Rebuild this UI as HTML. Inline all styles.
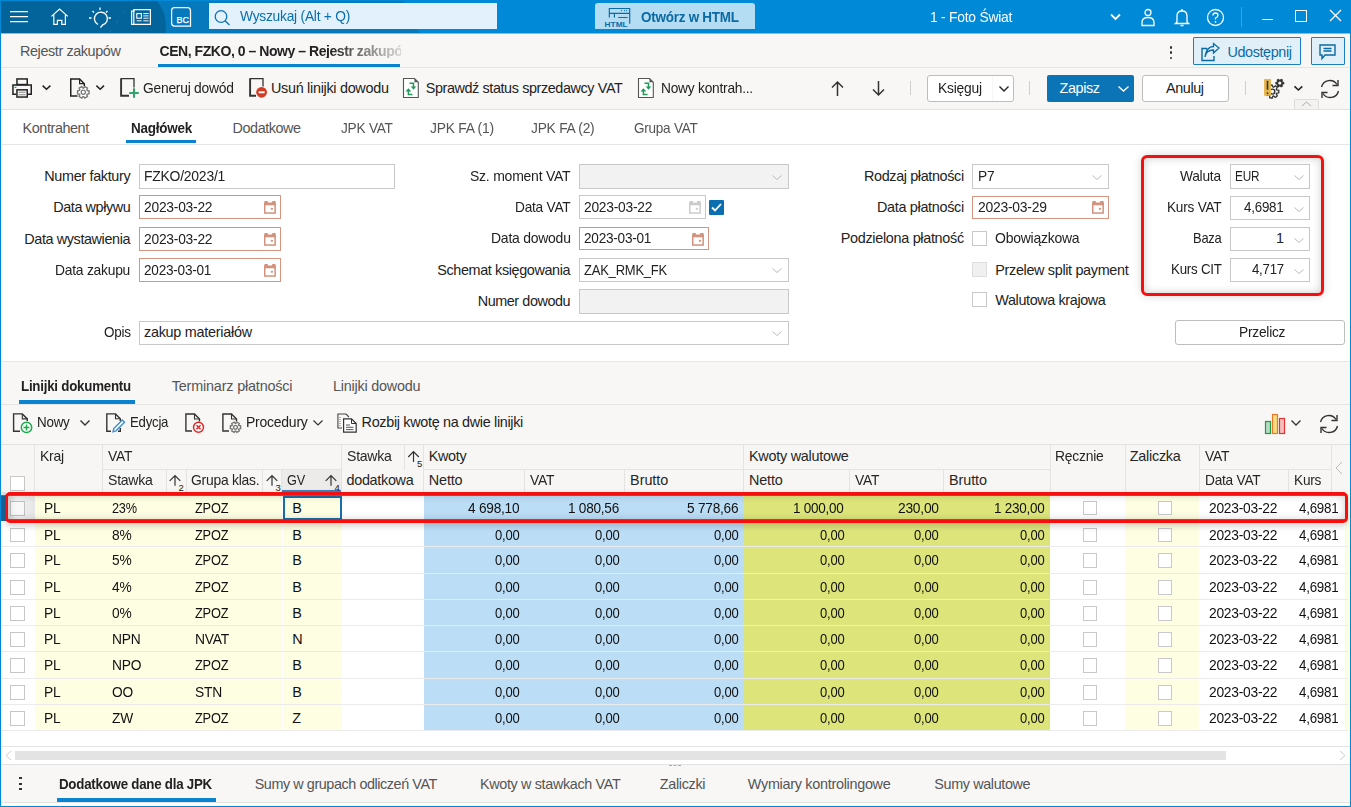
<!DOCTYPE html><html><head><meta charset="utf-8"><style>
html,body{margin:0;padding:0;}
body{width:1351px;height:807px;position:relative;overflow:hidden;background:#fff;font-family:"Liberation Sans",sans-serif;}
.t{position:absolute;white-space:nowrap;line-height:1;}
.r{position:absolute;box-sizing:border-box;}
</style></head><body>
<div class="r" style="left:0px;top:0px;width:1351px;height:34px;background:#0089d6;"></div>
<svg class="r" style="left:1px;top:1px;" width="430" height="32" viewBox="1 1 430 32"><path d="M1 1 H404 L419.5 33 H1 Z" fill="#0679bd"/></svg>
<div class="r" style="left:1px;top:33px;width:1349px;height:1px;background:#7fbfe6;"></div>
<svg class="r" style="left:1px;top:1px;" width="170" height="32" viewBox="0 0 170 32"><path d="M0 0 H156 C162 8 166 16 164.5 32 H0 Z" fill="#02649b"/><path d="M132 0 L107 33" stroke="#2a7db0" stroke-width="1" stroke-dasharray="4 8" opacity="0.6"/></svg>
<svg class="r" style="left:8px;top:8px;" width="22" height="18" viewBox="8 8 22 18"><path d="M10 11.6 H28 M10 16.5 H28 M10 21.5 H28" stroke="#fff" stroke-width="1.25"/></svg>
<svg class="r" style="left:48px;top:6px;" width="24" height="22" viewBox="48 6 24 22"><path d="M51.4 16.4 L59.6 9.1 L67.8 16.4" fill="none" stroke="#fff" stroke-width="1.25"/><path d="M53.8 14.6 V24.4 H57.4 V20.4 H61.8 V24.4 H65.4 V14.6" fill="none" stroke="#fff" stroke-width="1.2"/></svg>
<svg class="r" style="left:88px;top:6px;" width="24" height="22" viewBox="0 0 24 22"><path d="M8 19 A6.5 6.5 0 1 1 12.5 19.5 L10.5 22" fill="none" stroke="#fff" stroke-width="1.3" transform="translate(2,-0.5)"/><path d="M12 1.5 V4 M4.5 5 L6 6.5 M19.5 5 L18 6.5 M1 12 H3.5 M20.5 12 H23" stroke="#fff" stroke-width="1.3"/></svg>
<svg class="r" style="left:128px;top:6px;" width="26" height="22" viewBox="128 6 26 22"><path d="M133.8 9.6 H150.4 V24.3 H131.6 V11 H133.8 Z" fill="none" stroke="#fff" stroke-width="1.25"/><path d="M133.8 10 V24" stroke="#fff" stroke-width="1.2"/><rect x="136.8" y="13.6" width="4.6" height="4.6" fill="none" stroke="#fff" stroke-width="1.1"/><path d="M143.3 13.6 H148.6 M143.3 15.9 H148.6 M143.3 18.2 H148.6 M136.6 20.8 H141.6 M143.3 20.8 H148.6" stroke="#fff" stroke-width="0.95"/></svg>
<svg class="r" style="left:168px;top:4px;" width="26" height="26" viewBox="168 4 26 26"><path d="M174.5 7.7 H187.5 Q190.5 7.7 190.5 10.7 V26 H174.5 Q171.6 26 171.6 23 V10.7 Q171.6 7.7 174.5 7.7 Z" fill="none" stroke="#fff" stroke-width="1.25"/><text x="176.6" y="22.7" font-family="Liberation Sans" font-size="9" fill="#fff" stroke="#fff" stroke-width="0.25" textLength="12.5" lengthAdjust="spacingAndGlyphs">BC</text></svg>
<div class="r" style="left:209px;top:3px;width:288px;height:26px;background:#e2f1fb;"></div>
<svg class="r" style="left:213px;top:9px;" width="20" height="17" viewBox="0 0 20 17"><circle cx="8" cy="7.5" r="5.8" fill="none" stroke="#0a72b5" stroke-width="1.3"/><path d="M12 11.8 L16.5 16" stroke="#0a72b5" stroke-width="1.4"/></svg>
<div class="t" style="left:239.60px;top:9.01px;font-size:14.4px;font-weight:normal;color:#0a6fae;letter-spacing:-0.250px;transform:scaleX(0.9579);transform-origin:0 0;">Wyszukaj (Alt + Q)</div>
<div class="r" style="left:595px;top:3px;width:160px;height:26px;background:#b4dcf2;border-radius:3px 3px 0 0;"></div>
<svg class="r" style="left:600px;top:4px;" width="36" height="25" viewBox="600 4 36 25"><path d="M609.3 17.5 V8.5 H629.7 V23.7 M609.3 13.3 H629.7 M614.4 13.3 V17.5 M618.3 17.5 H627.7" fill="none" stroke="#0b6ba8" stroke-width="1.15"/><circle cx="621.5" cy="10.6" r="0.6" fill="#0b6ba8"/><circle cx="624.5" cy="10.6" r="0.6" fill="#0b6ba8"/><circle cx="626.6" cy="10.6" r="0.6" fill="#0b6ba8"/><text x="604.6" y="26.9" font-family="Liberation Sans" font-size="8.1" font-weight="bold" fill="#0b6ba8" textLength="23" lengthAdjust="spacingAndGlyphs">HTML</text></svg>
<div class="t" style="left:641.00px;top:9.95px;font-size:14.0px;font-weight:bold;color:#0b6aa3;letter-spacing:-0.250px;transform:scaleX(0.9608);transform-origin:0 0;">Otwórz w HTML</div>
<div class="t" style="left:929.50px;top:9.81px;font-size:14.4px;font-weight:normal;color:#fff;letter-spacing:-0.250px;transform:scaleX(0.9620);transform-origin:0 0;">1 - Foto Świat</div>
<svg class="r" style="left:1109px;top:12px;" width="13" height="9" viewBox="0 0 13 9"><path d="M2 2.5 L6.5 7 L11 2.5" fill="none" stroke="#fff" stroke-width="1.8"/></svg>
<svg class="r" style="left:1140px;top:8px;" width="16" height="19" viewBox="0 0 16 19"><circle cx="8" cy="4.5" r="3" fill="none" stroke="#fff" stroke-width="1.3"/><path d="M2 17.5 V14.5 Q2 9.5 8 9.5 Q14 9.5 14 14.5 V17.5 Z" fill="none" stroke="#fff" stroke-width="1.3"/></svg>
<svg class="r" style="left:1174px;top:8px;" width="16" height="19" viewBox="0 0 16 19"><path d="M3 14 V8 Q3 3 8 3 Q13 3 13 8 V14 L14.5 15.5 H1.5 Z" fill="none" stroke="#fff" stroke-width="1.3"/><path d="M8 1 V3 M6.5 17.5 H9.5" stroke="#fff" stroke-width="1.3"/></svg>
<svg class="r" style="left:1206px;top:8px;" width="19" height="19" viewBox="0 0 19 19"><circle cx="9.5" cy="9.5" r="8" fill="none" stroke="#fff" stroke-width="1.3"/><path d="M7 7.5 Q7 5 9.5 5 Q12 5 12 7.3 Q12 9 9.5 10 V11.5" fill="none" stroke="#fff" stroke-width="1.3"/><circle cx="9.5" cy="13.8" r="0.9" fill="#fff"/></svg>
<div class="r" style="left:1241px;top:7px;width:1px;height:20px;background:#3aa3e0;"></div>
<div class="r" style="left:1262px;top:19px;width:11px;height:1.3000000000000007px;background:#fff;"></div>
<div class="r" style="left:1295px;top:10px;width:12px;height:12px;border:1.3px solid #fff;"></div>
<svg class="r" style="left:1329px;top:9px;" width="13" height="13" viewBox="0 0 13 13"><path d="M1 1 L12 12 M12 1 L1 12" stroke="#fff" stroke-width="1.3"/></svg>
<div class="r" style="left:1px;top:34px;width:1349px;height:33px;background:#f8f7f5;"></div>
<div class="r" style="left:1px;top:67px;width:1349px;height:1px;background:#e6e5e3;"></div>
<div class="t" style="left:20.00px;top:44.11px;font-size:14.4px;font-weight:normal;color:#555;letter-spacing:-0.400px;">Rejestr zakupów</div>
<div class="t" style="left:159.5px;top:44.2px;font-size:14px;font-weight:bold;color:#222;letter-spacing:-0.45px;width:241px;overflow:hidden;-webkit-mask-image:linear-gradient(90deg,#000 70%,rgba(0,0,0,0.15) 100%);">CEN, FZKO, 0 – Nowy – Rejestr zakupów</div>
<div class="r" style="left:158px;top:63.5px;width:242px;height:3.5px;background:#0a84d0;"></div>
<div class="r" style="left:1169.5px;top:46px;width:2.5px;height:2.5px;background:#333;border-radius:1px;"></div>
<div class="r" style="left:1169.5px;top:51.3px;width:2.5px;height:2.5px;background:#333;border-radius:1px;"></div>
<div class="r" style="left:1169.5px;top:56.6px;width:2.5px;height:2.5px;background:#333;border-radius:1px;"></div>
<div class="r" style="left:1193px;top:37px;width:108px;height:28px;background:#e1eff9;border:1px solid #1c7fc0;border-radius:1px;"></div>
<svg class="r" style="left:1200px;top:42px;" width="22" height="20" viewBox="0 0 22 20"><path d="M7 6.5 H2 V18.5 H14 V14" fill="none" stroke="#0b6aa3" stroke-width="1.4"/><path d="M5 15 Q6 8 13.5 8 V11 L19 6 L13.5 1.5 V4.5 Q6.5 4.5 5 15 Z" fill="none" stroke="#0b6aa3" stroke-width="1.3"/></svg>
<div class="t" style="left:1227.40px;top:44.61px;font-size:14.4px;font-weight:normal;color:#0b6aa3;letter-spacing:-0.378px;">Udostępnij</div>
<div class="r" style="left:1311px;top:37px;width:34px;height:28px;background:#e1eff9;border:1px solid #1c7fc0;border-radius:1px;"></div>
<svg class="r" style="left:1318px;top:43px;" width="20" height="18" viewBox="0 0 20 18"><path d="M2 2 H17 V12 H7 L4 15.5 V12 H2 Z" fill="none" stroke="#0b6aa3" stroke-width="1.4"/><path d="M5.5 5.5 H13.5 M5.5 8 H13.5" stroke="#0b6aa3" stroke-width="1.4"/></svg>
<div class="r" style="left:1px;top:68px;width:1349px;height:41px;background:#f8f7f5;"></div>
<div class="r" style="left:1px;top:108.5px;width:1349px;height:1.0px;background:#e3e2e0;"></div>
<svg class="r" style="left:10px;top:76px;" width="26" height="24" viewBox="10 76 26 24"><rect x="16.95" y="78.95" width="10.3" height="5.6" fill="none" stroke="#222" stroke-width="1.5"/><path d="M16.2 94.25 H12.95 V84.95 H31.25 V94.25 H28" fill="none" stroke="#222" stroke-width="1.5"/><rect x="16.95" y="89.85" width="10.3" height="7.2" fill="none" stroke="#222" stroke-width="1.5"/><path d="M18.6 92.3 H25.6 M18.6 94.7 H25.6" stroke="#888" stroke-width="1.1"/><path d="M14.6 87.4 H16.4" stroke="#1a8ad4" stroke-width="1.3"/></svg>
<svg class="r" style="left:40px;top:83px;" width="14" height="9" viewBox="40 83 14 9"><path d="M42.6 85.6 L46.5 89.3 L50.4 85.6" fill="none" stroke="#222" stroke-width="1.5"/></svg>
<svg class="r" style="left:68px;top:76px;" width="24" height="24" viewBox="68 76 24 24"><path d="M77.5 96 H70.75 V78.95 H79.6 L84.3 83.7 V86.3" fill="none" stroke="#222" stroke-width="1.5"/><path d="M79.6 78.95 V83.7 H84.3" fill="none" stroke="#222" stroke-width="1.2"/><path d="M87.19 90.47 L89.00 90.77 L89.00 93.83 L87.19 94.13 L86.83 94.75 L87.47 96.47 L84.83 98.00 L83.66 96.58 L82.94 96.58 L81.77 98.00 L79.13 96.47 L79.77 94.75 L79.41 94.13 L77.60 93.83 L77.60 90.77 L79.41 90.47 L79.77 89.85 L79.13 88.13 L81.77 86.60 L82.94 88.02 L83.66 88.02 L84.83 86.60 L87.47 88.13 L86.83 89.85 Z" fill="#fff" stroke="#777" stroke-width="1.4"/><circle cx="83.3" cy="92.3" r="2.1" fill="none" stroke="#777" stroke-width="1.3"/></svg>
<svg class="r" style="left:94px;top:83px;" width="14" height="9" viewBox="94 83 14 9"><path d="M96.4 85.6 L100.2 89.2 L104 85.6" fill="none" stroke="#222" stroke-width="1.5"/></svg>
<svg class="r" style="left:118px;top:76px;" width="24" height="24" viewBox="118 76 24 24"><path d="M121.2 78.7 H134 V87.5" fill="none" stroke="#333" stroke-width="1.3"/><path d="M121.1 78.3 V95.7 H129" fill="none" stroke="#333" stroke-width="1.9"/><path d="M134 88.3 V97.8 M129.2 93 H138.8" stroke="#2ea36a" stroke-width="2"/></svg>
<div class="t" style="left:143.40px;top:80.81px;font-size:14.4px;font-weight:normal;color:#222;letter-spacing:-0.250px;transform:scaleX(0.9609);transform-origin:0 0;">Generuj dowód</div>
<svg class="r" style="left:247px;top:76px;" width="24" height="24" viewBox="247 76 24 24"><path d="M250.2 78.7 H263 V86.5" fill="none" stroke="#333" stroke-width="1.3"/><path d="M250.1 78.3 V95.7 H256" fill="none" stroke="#333" stroke-width="1.9"/><circle cx="261.6" cy="92.3" r="5.4" fill="#d23c24"/><path d="M258.6 92.3 H264.6" stroke="#fff" stroke-width="1.9"/></svg>
<div class="t" style="left:271.00px;top:80.81px;font-size:14.4px;font-weight:normal;color:#222;letter-spacing:-0.294px;">Usuń linijki dowodu</div>
<svg class="r" style="left:401px;top:76px;" width="20" height="24" viewBox="401 76 20 24"><path d="M403.5 78.5 H414.5 L418.3 82.3 V97.5 H403.5 Z" fill="#fff" stroke="#555" stroke-width="1.1"/><path d="M414.5 78.5 V82.3 H418.3 Z" fill="#555"/><path d="M409.5 83.3 H413.5 V88" fill="none" stroke="#21995a" stroke-width="1.5"/><path d="M410.8 86.6 H416.2 L413.5 89.8 Z" fill="#21995a"/><path d="M408.4 89.5 V94.6 H412.5" fill="none" stroke="#21995a" stroke-width="1.5"/><path d="M405.5 91.6 H411.3 L408.4 88.2 Z" fill="#21995a"/></svg>
<div class="t" style="left:425.70px;top:80.81px;font-size:14.4px;font-weight:normal;color:#222;letter-spacing:-0.396px;">Sprawdź status sprzedawcy VAT</div>
<svg class="r" style="left:636px;top:76px;" width="20" height="24" viewBox="636 76 20 24"><path d="M638.5 78.5 H649.5 L653.3 82.3 V97.5 H638.5 Z" fill="#fff" stroke="#555" stroke-width="1.1"/><path d="M649.5 78.5 V82.3 H653.3 Z" fill="#555"/><path d="M644.5 83.3 H648.5 V88" fill="none" stroke="#21995a" stroke-width="1.5"/><path d="M645.8 86.6 H651.2 L648.5 89.8 Z" fill="#21995a"/><path d="M643.4 89.5 V94.6 H647.5" fill="none" stroke="#21995a" stroke-width="1.5"/><path d="M640.5 91.6 H646.3 L643.4 88.2 Z" fill="#21995a"/></svg>
<div class="t" style="left:660.70px;top:80.81px;font-size:14.4px;font-weight:normal;color:#222;letter-spacing:-0.250px;transform:scaleX(0.9555);transform-origin:0 0;">Nowy kontrah...</div>
<svg class="r" style="left:830px;top:80px;" width="15" height="17" viewBox="0 0 15 17"><path d="M7.5 16 V2 M2 7.5 L7.5 2 L13 7.5" fill="none" stroke="#333" stroke-width="1.5"/></svg>
<svg class="r" style="left:871px;top:80px;" width="15" height="17" viewBox="0 0 15 17"><path d="M7.5 1 V15 M2 9.5 L7.5 15 L13 9.5" fill="none" stroke="#333" stroke-width="1.5"/></svg>
<div class="r" style="left:910px;top:81px;width:1px;height:14px;background:#cfcfcf;"></div>
<div class="r" style="left:927px;top:75px;width:87px;height:27px;background:#fff;border:1px solid #bdbdbd;border-radius:3px;"></div>
<div class="r" style="left:992px;top:76px;width:1px;height:25px;background:#f6f6f6;"></div>
<div class="t" style="left:938.00px;top:80.81px;font-size:14.4px;font-weight:normal;color:#222;letter-spacing:-0.250px;transform:scaleX(0.9628);transform-origin:0 0;">Księguj</div>
<svg class="r" style="left:998px;top:85px;" width="12" height="8" viewBox="0 0 12 8"><path d="M1.5 1.5 L6 6 L10.5 1.5" fill="none" stroke="#222" stroke-width="1.4"/></svg>
<div class="r" style="left:1029px;top:81px;width:1px;height:14px;background:#cfcfcf;"></div>
<div class="r" style="left:1047px;top:75px;width:87px;height:27px;background:#0a74b6;border-radius:2px;"></div>
<div class="t" style="left:1059.60px;top:81.31px;font-size:14.4px;font-weight:normal;color:#fff;letter-spacing:-0.400px;">Zapisz</div>
<svg class="r" style="left:1117px;top:85px;" width="13" height="8" viewBox="0 0 13 8"><path d="M1.5 1.5 L6.5 6 L11.5 1.5" fill="none" stroke="#fff" stroke-width="1.4"/></svg>
<div class="r" style="left:1142px;top:75px;width:87px;height:27px;background:#fff;border:1px solid #bdbdbd;border-radius:3px;"></div>
<div class="t" style="left:1166.00px;top:81.31px;font-size:14.4px;font-weight:normal;color:#222;letter-spacing:-0.400px;">Anuluj</div>
<div class="r" style="left:1245px;top:81px;width:1px;height:14px;background:#cfcfcf;"></div>
<svg class="r" style="left:1260px;top:76px;" width="30" height="24" viewBox="1260 76 30 24"><path d="M1276.58 89.91 L1278.78 90.36 L1278.78 92.84 L1276.58 93.29 L1276.29 93.89 L1277.31 95.90 L1275.38 97.44 L1273.64 96.00 L1273.00 96.15 L1272.06 98.20 L1269.65 97.65 L1269.70 95.39 L1269.18 94.98 L1267.00 95.53 L1265.92 93.30 L1267.71 91.93 L1267.71 91.27 L1265.92 89.90 L1267.00 87.67 L1269.18 88.22 L1269.70 87.81 L1269.65 85.55 L1272.06 85.00 L1273.00 87.05 L1273.64 87.20 L1275.38 85.76 L1277.31 87.30 L1276.29 89.31 Z" fill="none" stroke="#333" stroke-width="1.3"/><circle cx="1272.3" cy="91.6" r="2.5" fill="none" stroke="#333" stroke-width="1.4"/><path d="M1282.79 81.69 L1284.24 81.91 L1284.24 84.29 L1282.79 84.51 L1282.51 84.98 L1283.05 86.35 L1280.99 87.54 L1280.08 86.39 L1279.52 86.39 L1278.61 87.54 L1276.55 86.35 L1277.09 84.98 L1276.81 84.51 L1275.36 84.29 L1275.36 81.91 L1276.81 81.69 L1277.09 81.22 L1276.55 79.85 L1278.61 78.66 L1279.52 79.81 L1280.08 79.81 L1280.99 78.66 L1283.05 79.85 L1282.51 81.22 Z" fill="#333"/><circle cx="1279.8" cy="83.1" r="1.6" fill="#f8f7f5"/><rect x="1264" y="79" width="7" height="16.7" fill="#e6b84f"/><path d="M1267.5 80.8 V89.8" stroke="#333" stroke-width="1.6"/><circle cx="1267.5" cy="93.2" r="0.95" fill="#333"/></svg>
<svg class="r" style="left:1292px;top:84px;" width="13" height="9" viewBox="1292 84 13 9"><path d="M1294.5 86.3 L1298.4 90 L1302.3 86.3" fill="none" stroke="#222" stroke-width="1.6"/></svg>
<svg class="r" style="left:1318px;top:78px;" width="24" height="22" viewBox="0 0 24 22"><path d="M3.5 9 A8.5 8.5 0 0 1 19 6.5 M20.5 13 A8.5 8.5 0 0 1 5 15.5" fill="none" stroke="#333" stroke-width="1.4"/><path d="M20 2 V7.5 H14.5 M4 20 V14.5 H9.5" fill="none" stroke="#333" stroke-width="1.4"/></svg>
<div class="r" style="left:1294px;top:99px;width:25px;height:10px;background:#f3f2f0;border:1px solid #dcdcdc;border-bottom:none;border-radius:2px 2px 0 0;"></div>
<svg class="r" style="left:1301px;top:101px;" width="11" height="6" viewBox="0 0 11 6"><path d="M1 5 L5.5 1 L10 5" fill="none" stroke="#aaa" stroke-width="1"/></svg>
<div class="r" style="left:1px;top:109.5px;width:1349px;height:34.5px;background:#fff;"></div>
<div class="r" style="left:1px;top:144px;width:1349px;height:1px;background:#e6e6e6;"></div>
<div class="t" style="left:22.60px;top:121.01px;font-size:14.4px;font-weight:normal;color:#555;letter-spacing:-0.422px;">Kontrahent</div>
<div class="t" style="left:130.60px;top:121.35px;font-size:14.0px;font-weight:bold;color:#222;letter-spacing:-0.250px;transform:scaleX(0.9615);transform-origin:0 0;">Nagłówek</div>
<div class="r" style="left:126px;top:139.8px;width:70px;height:3.1999999999999886px;background:#0a84d0;"></div>
<div class="t" style="left:232.60px;top:121.01px;font-size:14.4px;font-weight:normal;color:#555;letter-spacing:-0.450px;">Dodatkowe</div>
<div class="t" style="left:341.00px;top:121.01px;font-size:14.4px;font-weight:normal;color:#555;letter-spacing:-0.250px;transform:scaleX(0.9489);transform-origin:0 0;">JPK VAT</div>
<div class="t" style="left:429.60px;top:121.01px;font-size:14.4px;font-weight:normal;color:#555;letter-spacing:-0.250px;transform:scaleX(0.9632);transform-origin:0 0;">JPK FA (1)</div>
<div class="t" style="left:531.00px;top:121.01px;font-size:14.4px;font-weight:normal;color:#555;letter-spacing:-0.250px;transform:scaleX(0.9572);transform-origin:0 0;">JPK FA (2)</div>
<div class="t" style="left:633.70px;top:121.01px;font-size:14.4px;font-weight:normal;color:#555;letter-spacing:-0.250px;transform:scaleX(0.9396);transform-origin:0 0;">Grupa VAT</div>
<div class="r" style="left:1px;top:145px;width:1349px;height:216px;background:#fff;"></div>
<div class="r" style="left:1px;top:361px;width:1349px;height:1px;background:#e6e6e6;"></div>
<div class="t" style="left:44.30px;top:168.81px;font-size:14.4px;font-weight:normal;color:#222;letter-spacing:-0.333px;">Numer faktury</div>
<div class="r" style="left:139px;top:164px;width:256px;height:25px;background:#fff;border:1px solid #c8c8c8;"></div>
<div class="t" style="left:144.00px;top:168.81px;font-size:14.4px;font-weight:normal;color:#222;letter-spacing:-0.250px;transform:scaleX(0.9690);transform-origin:0 0;">FZKO/2023/1</div>
<div class="t" style="left:53.30px;top:199.81px;font-size:14.4px;font-weight:normal;color:#222;letter-spacing:-0.420px;">Data wpływu</div>
<div class="r" style="left:139px;top:195px;width:142px;height:24px;background:#fff;border:1px solid #d5957f;"></div>
<div class="t" style="left:144.00px;top:199.81px;font-size:14.4px;font-weight:normal;color:#222;letter-spacing:-0.250px;transform:scaleX(0.9601);transform-origin:0 0;">2023-03-22</div>
<svg class="r" style="left:263px;top:200px;" width="14" height="14" viewBox="263 200 14 14"><rect x="264.75" y="203.45" width="10.4" height="9.6" fill="none" stroke="#d3927c" stroke-width="1.5"/><rect x="264" y="202.7" width="11.9" height="2.6" fill="#d3927c"/><rect x="264.5" y="201" width="3.3" height="2.2" fill="#d3927c"/><rect x="272.2" y="201" width="3.3" height="2.2" fill="#d3927c"/><circle cx="271.9" cy="208.8" r="1.15" fill="#d3927c"/></svg>
<div class="t" style="left:24.30px;top:231.81px;font-size:14.4px;font-weight:normal;color:#222;letter-spacing:-0.387px;">Data wystawienia</div>
<div class="r" style="left:139px;top:227px;width:142px;height:24px;background:#fff;border:1px solid #d5957f;"></div>
<div class="t" style="left:144.00px;top:231.81px;font-size:14.4px;font-weight:normal;color:#222;letter-spacing:-0.250px;transform:scaleX(0.9601);transform-origin:0 0;">2023-03-22</div>
<svg class="r" style="left:263px;top:232px;" width="14" height="14" viewBox="263 232 14 14"><rect x="264.75" y="235.45" width="10.4" height="9.6" fill="none" stroke="#d3927c" stroke-width="1.5"/><rect x="264" y="234.7" width="11.9" height="2.6" fill="#d3927c"/><rect x="264.5" y="233" width="3.3" height="2.2" fill="#d3927c"/><rect x="272.2" y="233" width="3.3" height="2.2" fill="#d3927c"/><circle cx="271.9" cy="240.8" r="1.15" fill="#d3927c"/></svg>
<div class="t" style="left:55.30px;top:262.81px;font-size:14.4px;font-weight:normal;color:#222;letter-spacing:-0.250px;transform:scaleX(0.9617);transform-origin:0 0;">Data zakupu</div>
<div class="r" style="left:139px;top:258px;width:142px;height:24px;background:#fff;border:1px solid #d5957f;"></div>
<div class="t" style="left:144.00px;top:262.81px;font-size:14.4px;font-weight:normal;color:#222;letter-spacing:-0.250px;transform:scaleX(0.9447);transform-origin:0 0;">2023-03-01</div>
<svg class="r" style="left:263px;top:263px;" width="14" height="14" viewBox="263 263 14 14"><rect x="264.75" y="266.45" width="10.4" height="9.6" fill="none" stroke="#d3927c" stroke-width="1.5"/><rect x="264" y="265.7" width="11.9" height="2.6" fill="#d3927c"/><rect x="264.5" y="264" width="3.3" height="2.2" fill="#d3927c"/><rect x="272.2" y="264" width="3.3" height="2.2" fill="#d3927c"/><circle cx="271.9" cy="271.8" r="1.15" fill="#d3927c"/></svg>
<div class="t" style="left:103.70px;top:325.31px;font-size:14.4px;font-weight:normal;color:#222;letter-spacing:-0.250px;transform:scaleX(0.9359);transform-origin:0 0;">Opis</div>
<div class="r" style="left:139px;top:320.5px;width:650px;height:24.5px;background:#fff;border:1px solid #c8c8c8;"></div>
<div class="t" style="left:144.00px;top:325.31px;font-size:14.4px;font-weight:normal;color:#222;letter-spacing:-0.260px;">zakup materiałów</div>
<svg class="r" style="left:771px;top:330px;" width="12" height="7" viewBox="0 0 12 7"><path d="M1.5 1.5 L6 5.5 L10.5 1.5" fill="none" stroke="#bbb" stroke-width="1"/></svg>
<div class="t" style="left:470.00px;top:168.81px;font-size:14.4px;font-weight:normal;color:#222;letter-spacing:-0.250px;transform:scaleX(0.9734);transform-origin:0 0;">Sz. moment VAT</div>
<div class="r" style="left:579px;top:164px;width:210px;height:25px;background:#f2f2f2;border:1px solid #c8c8c8;"></div>
<svg class="r" style="left:771px;top:174px;" width="12" height="7" viewBox="0 0 12 7"><path d="M1.5 1.5 L6 5.5 L10.5 1.5" fill="none" stroke="#bbb" stroke-width="1"/></svg>
<div class="t" style="left:515.00px;top:199.81px;font-size:14.4px;font-weight:normal;color:#222;letter-spacing:-0.250px;transform:scaleX(0.9513);transform-origin:0 0;">Data VAT</div>
<div class="r" style="left:579px;top:195px;width:127px;height:24px;background:#fff;border:1px solid #c8c8c8;"></div>
<div class="t" style="left:584.00px;top:199.81px;font-size:14.4px;font-weight:normal;color:#222;letter-spacing:-0.250px;transform:scaleX(0.9587);transform-origin:0 0;">2023-03-22</div>
<svg class="r" style="left:688px;top:200px;" width="14" height="14" viewBox="688 200 14 14"><rect x="689.75" y="203.45" width="10.4" height="9.6" fill="none" stroke="#ccc" stroke-width="1.5"/><rect x="689" y="202.7" width="11.9" height="2.6" fill="#ccc"/><rect x="689.5" y="201" width="3.3" height="2.2" fill="#ccc"/><rect x="697.2" y="201" width="3.3" height="2.2" fill="#ccc"/><circle cx="696.9" cy="208.8" r="1.15" fill="#ccc"/></svg>
<div class="r" style="left:709px;top:200px;width:15px;height:15px;background:#0a6eb0;border-radius:1px;"></div>
<svg class="r" style="left:709px;top:200px;" width="15" height="15" viewBox="0 0 15 15"><path d="M3 7.5 L6 10.5 L12 4" fill="none" stroke="#fff" stroke-width="1.8"/></svg>
<div class="t" style="left:490.70px;top:231.31px;font-size:14.4px;font-weight:normal;color:#222;letter-spacing:-0.250px;transform:scaleX(0.9709);transform-origin:0 0;">Data dowodu</div>
<div class="r" style="left:579px;top:227px;width:130px;height:23px;background:#fff;border:1px solid #d5957f;"></div>
<div class="t" style="left:584.00px;top:231.31px;font-size:14.4px;font-weight:normal;color:#222;letter-spacing:-0.250px;transform:scaleX(0.9447);transform-origin:0 0;">2023-03-01</div>
<svg class="r" style="left:691px;top:232px;" width="14" height="14" viewBox="691 232 14 14"><rect x="692.75" y="235.45" width="10.4" height="9.6" fill="none" stroke="#d3927c" stroke-width="1.5"/><rect x="692" y="234.7" width="11.9" height="2.6" fill="#d3927c"/><rect x="692.5" y="233" width="3.3" height="2.2" fill="#d3927c"/><rect x="700.2" y="233" width="3.3" height="2.2" fill="#d3927c"/><circle cx="699.9" cy="240.8" r="1.15" fill="#d3927c"/></svg>
<div class="t" style="left:437.30px;top:262.81px;font-size:14.4px;font-weight:normal;color:#222;letter-spacing:-0.378px;">Schemat księgowania</div>
<div class="r" style="left:579px;top:257.5px;width:210px;height:24.5px;background:#fff;border:1px solid #c8c8c8;"></div>
<div class="t" style="left:584.00px;top:262.81px;font-size:14.4px;font-weight:normal;color:#222;letter-spacing:-0.250px;transform:scaleX(0.9040);transform-origin:0 0;">ZAK_RMK_FK</div>
<svg class="r" style="left:771px;top:267px;" width="12" height="7" viewBox="0 0 12 7"><path d="M1.5 1.5 L6 5.5 L10.5 1.5" fill="none" stroke="#bbb" stroke-width="1"/></svg>
<div class="t" style="left:477.70px;top:294.31px;font-size:14.4px;font-weight:normal;color:#222;letter-spacing:-0.427px;">Numer dowodu</div>
<div class="r" style="left:579px;top:289px;width:210px;height:25px;background:#f2f2f2;border:1px solid #c8c8c8;"></div>
<div class="t" style="left:864.00px;top:168.81px;font-size:14.4px;font-weight:normal;color:#222;letter-spacing:-0.367px;">Rodzaj płatności</div>
<div class="r" style="left:972px;top:164px;width:137px;height:25px;background:#fff;border:1px solid #c8c8c8;"></div>
<div class="t" style="left:977.70px;top:168.81px;font-size:14.4px;font-weight:normal;color:#222;letter-spacing:-0.250px;transform:scaleX(0.9576);transform-origin:0 0;">P7</div>
<svg class="r" style="left:1091px;top:174px;" width="12" height="7" viewBox="0 0 12 7"><path d="M1.5 1.5 L6 5.5 L10.5 1.5" fill="none" stroke="#bbb" stroke-width="1"/></svg>
<div class="t" style="left:877.00px;top:199.81px;font-size:14.4px;font-weight:normal;color:#222;letter-spacing:-0.315px;">Data płatności</div>
<div class="r" style="left:972px;top:195.5px;width:137px;height:23.5px;background:#fff;border:1px solid #d5957f;"></div>
<div class="t" style="left:977.70px;top:199.81px;font-size:14.4px;font-weight:normal;color:#222;letter-spacing:-0.250px;transform:scaleX(0.9657);transform-origin:0 0;">2023-03-29</div>
<svg class="r" style="left:1091px;top:200px;" width="14" height="14" viewBox="1091 200 14 14"><rect x="1092.75" y="203.45" width="10.4" height="9.6" fill="none" stroke="#d3927c" stroke-width="1.5"/><rect x="1092" y="202.7" width="11.9" height="2.6" fill="#d3927c"/><rect x="1092.5" y="201" width="3.3" height="2.2" fill="#d3927c"/><rect x="1100.2" y="201" width="3.3" height="2.2" fill="#d3927c"/><circle cx="1099.9" cy="208.8" r="1.15" fill="#d3927c"/></svg>
<div class="t" style="left:840.80px;top:231.31px;font-size:14.4px;font-weight:normal;color:#222;letter-spacing:-0.306px;">Podzielona płatność</div>
<div class="r" style="left:972px;top:231px;width:15px;height:15px;background:#fff;border:1px solid #c8c8c8;"></div>
<div class="t" style="left:995.30px;top:231.31px;font-size:14.4px;font-weight:normal;color:#222;letter-spacing:-0.250px;transform:scaleX(0.9713);transform-origin:0 0;">Obowiązkowa</div>
<div class="r" style="left:972px;top:262px;width:15px;height:15px;background:#f0f0f0;border:1px solid #dedede;"></div>
<div class="t" style="left:995.30px;top:262.81px;font-size:14.4px;font-weight:normal;color:#222;letter-spacing:-0.330px;">Przelew split payment</div>
<div class="r" style="left:972px;top:292px;width:15px;height:15px;background:#fff;border:1px solid #c8c8c8;"></div>
<div class="t" style="left:995.30px;top:292.81px;font-size:14.4px;font-weight:normal;color:#222;letter-spacing:-0.380px;">Walutowa krajowa</div>
<div class="r" style="left:1141px;top:155px;width:183px;height:140.5px;border:3px solid #f5100f;border-radius:6px;box-shadow:0 0 9px rgba(0,0,0,0.16), inset 0 0 9px rgba(0,0,0,0.2);"></div>
<div class="t" style="left:1180.40px;top:168.81px;font-size:14.4px;font-weight:normal;color:#222;letter-spacing:-0.250px;transform:scaleX(0.9548);transform-origin:0 0;">Waluta</div>
<div class="r" style="left:1230px;top:164px;width:80px;height:24.5px;background:#fff;border:1px solid #c8c8c8;"></div>
<div class="t" style="left:1235.00px;top:168.81px;font-size:14.4px;font-weight:normal;color:#222;letter-spacing:-0.250px;transform:scaleX(0.8161);transform-origin:0 0;">EUR</div>
<svg class="r" style="left:1293px;top:174px;" width="12" height="7" viewBox="0 0 12 7"><path d="M1.5 1.5 L6 5.5 L10.5 1.5" fill="none" stroke="#bbb" stroke-width="1"/></svg>
<div class="t" style="left:1166.90px;top:200.31px;font-size:14.4px;font-weight:normal;color:#222;letter-spacing:-0.250px;transform:scaleX(0.9472);transform-origin:0 0;">Kurs VAT</div>
<div class="r" style="left:1230px;top:195.5px;width:80px;height:24.5px;background:#fff;border:1px solid #c8c8c8;"></div>
<div class="t" style="left:1244.30px;top:200.31px;font-size:14.4px;font-weight:normal;color:#222;letter-spacing:-0.250px;transform:scaleX(0.9287);transform-origin:0 0;">4,6981</div>
<svg class="r" style="left:1293px;top:205.5px;" width="12" height="7" viewBox="0 0 12 7"><path d="M1.5 1.5 L6 5.5 L10.5 1.5" fill="none" stroke="#bbb" stroke-width="1"/></svg>
<div class="t" style="left:1192.70px;top:231.31px;font-size:14.4px;font-weight:normal;color:#222;letter-spacing:-0.250px;transform:scaleX(0.8989);transform-origin:0 0;">Baza</div>
<div class="r" style="left:1230px;top:226.5px;width:80px;height:24.5px;background:#fff;border:1px solid #c8c8c8;"></div>
<div class="t" style="left:1276.00px;top:231.31px;font-size:14.4px;font-weight:normal;color:#222;letter-spacing:-0.200px;">1</div>
<svg class="r" style="left:1293px;top:236.5px;" width="12" height="7" viewBox="0 0 12 7"><path d="M1.5 1.5 L6 5.5 L10.5 1.5" fill="none" stroke="#bbb" stroke-width="1"/></svg>
<div class="t" style="left:1170.70px;top:262.31px;font-size:14.4px;font-weight:normal;color:#222;letter-spacing:-0.250px;transform:scaleX(0.9246);transform-origin:0 0;">Kurs CIT</div>
<div class="r" style="left:1230px;top:257.5px;width:80px;height:24.5px;background:#fff;border:1px solid #c8c8c8;"></div>
<div class="t" style="left:1251.90px;top:262.31px;font-size:14.4px;font-weight:normal;color:#222;letter-spacing:-0.250px;transform:scaleX(0.9171);transform-origin:0 0;">4,717</div>
<svg class="r" style="left:1293px;top:267.5px;" width="12" height="7" viewBox="0 0 12 7"><path d="M1.5 1.5 L6 5.5 L10.5 1.5" fill="none" stroke="#bbb" stroke-width="1"/></svg>
<div class="r" style="left:1175px;top:320px;width:170px;height:25px;background:#fff;border:1px solid #bdbdbd;border-radius:3px;"></div>
<div class="t" style="left:1238.50px;top:324.81px;font-size:14.4px;font-weight:normal;color:#222;letter-spacing:-0.250px;transform:scaleX(0.9558);transform-origin:0 0;">Przelicz</div>
<div class="r" style="left:1px;top:362px;width:1349px;height:42px;background:#f8f7f5;"></div>
<div class="r" style="left:1px;top:403.5px;width:1349px;height:1.0px;background:#e6e5e3;"></div>
<div class="t" style="left:20.80px;top:379.15px;font-size:14.0px;font-weight:bold;color:#222;letter-spacing:-0.250px;transform:scaleX(0.9516);transform-origin:0 0;">Linijki dokumentu</div>
<div class="r" style="left:19px;top:400px;width:116px;height:3.5px;background:#0a84d0;"></div>
<div class="t" style="left:171.70px;top:378.81px;font-size:14.4px;font-weight:normal;color:#555;letter-spacing:-0.172px;">Terminarz płatności</div>
<div class="t" style="left:333.00px;top:378.81px;font-size:14.4px;font-weight:normal;color:#555;letter-spacing:-0.215px;">Linijki dowodu</div>
<div class="r" style="left:1px;top:404.5px;width:1349px;height:39.5px;background:#f8f7f5;"></div>
<div class="r" style="left:1px;top:444px;width:1349px;height:1px;background:#e3e2e0;"></div>
<svg class="r" style="left:11px;top:411px;" width="24" height="24" viewBox="11 411 24 24"><path d="M20 431.3 H13.6 V413.9 H22.3 L27.3 418.9 V421" fill="none" stroke="#333" stroke-width="1.4"/><path d="M22.3 413.9 V418.9 H27.3" fill="none" stroke="#333" stroke-width="1.1"/><circle cx="26.5" cy="427.4" r="5.2" fill="#fff" stroke="#1aab4a" stroke-width="1.5"/><path d="M26.5 424.4 V430.4 M23.5 427.4 H29.5" stroke="#1aab4a" stroke-width="1.5"/></svg>
<div class="t" style="left:36.60px;top:415.41px;font-size:14.4px;font-weight:normal;color:#222;letter-spacing:-0.250px;transform:scaleX(0.9305);transform-origin:0 0;">Nowy</div>
<svg class="r" style="left:79px;top:419px;" width="12" height="8" viewBox="0 0 12 8"><path d="M1.5 1.5 L6 6 L10.5 1.5" fill="none" stroke="#333" stroke-width="1.4"/></svg>
<svg class="r" style="left:104px;top:411px;" width="24" height="24" viewBox="104 411 24 24"><path d="M111 431.3 H106.8 V413.9 H115.5 L120.3 418.7 V421 M118 431.3 H120.3 V428" fill="none" stroke="#333" stroke-width="1.4"/><path d="M115.5 413.9 V418.7 H120.3" fill="none" stroke="#333" stroke-width="1.1"/><path d="M113 431.8 L113.8 428.6 L122.3 420.1 L124.5 422.3 L116 430.8 Z" fill="#fff" stroke="#3a8fd8" stroke-width="1.4"/></svg>
<div class="t" style="left:129.50px;top:415.41px;font-size:14.4px;font-weight:normal;color:#222;letter-spacing:-0.250px;transform:scaleX(0.9156);transform-origin:0 0;">Edycja</div>
<svg class="r" style="left:183px;top:411px;" width="24" height="24" viewBox="183 411 24 24"><path d="M192 431 H185.9 V414 H194.5 L199.5 419 V421.5" fill="none" stroke="#333" stroke-width="1.4"/><path d="M194.5 414 V419 H199.5" fill="none" stroke="#333" stroke-width="1.1"/><circle cx="198.5" cy="427.2" r="5" fill="#fff" stroke="#e02828" stroke-width="1.5"/><path d="M196.5 425.2 L200.5 429.2 M200.5 425.2 L196.5 429.2" stroke="#e02828" stroke-width="1.5"/></svg>
<svg class="r" style="left:220px;top:411px;" width="24" height="24" viewBox="220 411 24 24"><path d="M229 431 H222.9 V414 H231.5 L236.5 419 V421.5" fill="none" stroke="#333" stroke-width="1.4"/><path d="M231.5 414 V419 H236.5" fill="none" stroke="#333" stroke-width="1.1"/><path d="M239.03 425.54 L240.62 425.83 L240.62 428.57 L239.03 428.86 L238.70 429.43 L239.25 430.95 L236.87 432.32 L235.83 431.09 L235.17 431.09 L234.13 432.32 L231.75 430.95 L232.30 429.43 L231.97 428.86 L230.38 428.57 L230.38 425.83 L231.97 425.54 L232.30 424.97 L231.75 423.45 L234.13 422.08 L235.17 423.31 L235.83 423.31 L236.87 422.08 L239.25 423.45 L238.70 424.97 Z" fill="#f8f7f5" stroke="#777" stroke-width="1.4"/><circle cx="235.5" cy="427.2" r="1.9" fill="none" stroke="#777" stroke-width="1.3"/></svg>
<div class="t" style="left:245.50px;top:415.41px;font-size:14.4px;font-weight:normal;color:#222;letter-spacing:-0.250px;transform:scaleX(0.9717);transform-origin:0 0;">Procedury</div>
<svg class="r" style="left:312px;top:419px;" width="12" height="8" viewBox="0 0 12 8"><path d="M1.5 1.5 L6 6 L10.5 1.5" fill="none" stroke="#333" stroke-width="1.2"/></svg>
<svg class="r" style="left:335px;top:411px;" width="24" height="24" viewBox="335 411 24 24"><path d="M342 428 H337.9 V414 H346 L349 417" fill="none" stroke="#444" stroke-width="1.1"/><path d="M340 417 V426" stroke="#666" stroke-width="0.9" stroke-dasharray="1 1"/><path d="M343.6 418.8 H351.5 L356.2 423.5 V432.2 H343.6 Z" fill="#fff" stroke="#333" stroke-width="1.2"/><path d="M351.5 418.8 V423.5 H356.2" fill="none" stroke="#333" stroke-width="1"/><path d="M346 425 H350 M346 427.3 H353.5 M346 429.6 H353.5" stroke="#555" stroke-width="1"/></svg>
<div class="t" style="left:361.60px;top:415.41px;font-size:14.4px;font-weight:normal;color:#222;letter-spacing:-0.322px;">Rozbij kwotę na dwie linijki</div>
<svg class="r" style="left:1264px;top:413px;" width="23" height="22" viewBox="0 0 23 22"><rect x="1.5" y="8.5" width="5" height="12" fill="#b5dcc0" stroke="#1c9a4a" stroke-width="1.2"/><rect x="8.5" y="1.5" width="5" height="19" fill="#f7dc80" stroke="#e8782a" stroke-width="1.2"/><rect x="15.5" y="5.5" width="5" height="15" fill="#f2c0c0" stroke="#e23232" stroke-width="1.2"/></svg>
<svg class="r" style="left:1290px;top:419px;" width="12" height="8" viewBox="0 0 12 8"><path d="M1.5 1.5 L6 6 L10.5 1.5" fill="none" stroke="#333" stroke-width="1.3"/></svg>
<svg class="r" style="left:1317px;top:413px;" width="24" height="22" viewBox="0 0 24 22"><path d="M3.5 9 A8.5 8.5 0 0 1 19 6.5 M20.5 13 A8.5 8.5 0 0 1 5 15.5" fill="none" stroke="#333" stroke-width="1.4"/><path d="M20 2 V7.5 H14.5 M4 20 V14.5 H9.5" fill="none" stroke="#333" stroke-width="1.4"/></svg>
<div class="r" style="left:1px;top:445px;width:1349px;height:47px;background:#f7f6f4;"></div>
<div class="r" style="left:101.7px;top:469px;width:239.0px;height:1px;background:#e4e3e1;"></div>
<div class="r" style="left:423.5px;top:469px;width:626.3px;height:1px;background:#e4e3e1;"></div>
<div class="r" style="left:1199.5px;top:469px;width:131.5px;height:1px;background:#e4e3e1;"></div>
<div class="r" style="left:34px;top:445px;width:1px;height:47px;background:#e4e3e1;"></div>
<div class="r" style="left:101.5px;top:445px;width:1.0px;height:47px;background:#e4e3e1;"></div>
<div class="r" style="left:165.5px;top:470px;width:1.0px;height:22px;background:#e4e3e1;"></div>
<div class="r" style="left:185.5px;top:470px;width:1.0px;height:22px;background:#e4e3e1;"></div>
<div class="r" style="left:261.5px;top:470px;width:1.0px;height:22px;background:#e4e3e1;"></div>
<div class="r" style="left:281px;top:470px;width:1px;height:22px;background:#e4e3e1;"></div>
<div class="r" style="left:320.5px;top:470px;width:1.0px;height:22px;background:#e4e3e1;"></div>
<div class="r" style="left:340.5px;top:445px;width:1.0px;height:47px;background:#e4e3e1;"></div>
<div class="r" style="left:404px;top:445px;width:1px;height:25px;background:#e4e3e1;"></div>
<div class="r" style="left:423.3px;top:445px;width:1.0px;height:47px;background:#e4e3e1;"></div>
<div class="r" style="left:524.2px;top:470px;width:1.0px;height:22px;background:#e4e3e1;"></div>
<div class="r" style="left:624.2px;top:470px;width:1.0px;height:22px;background:#e4e3e1;"></div>
<div class="r" style="left:743.3px;top:445px;width:1.0px;height:47px;background:#e4e3e1;"></div>
<div class="r" style="left:849.2px;top:470px;width:1.0px;height:22px;background:#e4e3e1;"></div>
<div class="r" style="left:943px;top:470px;width:1px;height:22px;background:#e4e3e1;"></div>
<div class="r" style="left:1049.6px;top:445px;width:1.0px;height:47px;background:#e4e3e1;"></div>
<div class="r" style="left:1124.5px;top:445px;width:1.0px;height:47px;background:#e4e3e1;"></div>
<div class="r" style="left:1199.3px;top:445px;width:1.0px;height:47px;background:#e4e3e1;"></div>
<div class="r" style="left:1288.4px;top:470px;width:1.0px;height:22px;background:#e4e3e1;"></div>
<div class="r" style="left:1331px;top:445px;width:1px;height:47px;background:#e4e3e1;"></div>
<div class="r" style="left:281.5px;top:470px;width:59.0px;height:22px;background:#ecebe9;"></div>
<div class="r" style="left:281.5px;top:490px;width:59.0px;height:2px;background:#3f7fb8;"></div>
<div class="r" style="left:10px;top:476px;width:15px;height:15px;background:#fff;border:1px solid #c8c8c8;"></div>
<div class="t" style="left:40.30px;top:448.51px;font-size:14.4px;font-weight:normal;color:#262626;letter-spacing:-0.250px;transform:scaleX(0.9725);transform-origin:0 0;">Kraj</div>
<div class="t" style="left:107.80px;top:448.51px;font-size:14.4px;font-weight:normal;color:#262626;letter-spacing:-0.250px;transform:scaleX(0.9626);transform-origin:0 0;">VAT</div>
<div class="t" style="left:107.50px;top:472.61px;font-size:14.4px;font-weight:normal;color:#262626;letter-spacing:-0.250px;transform:scaleX(0.9772);transform-origin:0 0;">Stawka</div>
<div class="t" style="left:191.20px;top:472.61px;font-size:14.4px;font-weight:normal;color:#262626;letter-spacing:-0.250px;transform:scaleX(0.9662);transform-origin:0 0;">Grupa klas.</div>
<div class="t" style="left:287.40px;top:472.61px;font-size:14.4px;font-weight:normal;color:#262626;letter-spacing:-0.250px;transform:scaleX(0.8808);transform-origin:0 0;">GV</div>
<div class="t" style="left:346.50px;top:448.51px;font-size:14.4px;font-weight:normal;color:#262626;letter-spacing:-0.250px;transform:scaleX(0.9772);transform-origin:0 0;">Stawka</div>
<div class="t" style="left:346.50px;top:472.61px;font-size:14.4px;font-weight:normal;color:#262626;letter-spacing:-0.300px;">dodatkowa</div>
<div class="t" style="left:428.80px;top:448.51px;font-size:14.4px;font-weight:normal;color:#262626;letter-spacing:-0.350px;">Kwoty</div>
<div class="t" style="left:428.80px;top:472.61px;font-size:14.4px;font-weight:normal;color:#262626;letter-spacing:-0.150px;">Netto</div>
<div class="t" style="left:530.00px;top:472.61px;font-size:14.4px;font-weight:normal;color:#262626;letter-spacing:-0.250px;transform:scaleX(0.9626);transform-origin:0 0;">VAT</div>
<div class="t" style="left:630.10px;top:472.61px;font-size:14.4px;font-weight:normal;color:#262626;letter-spacing:-0.040px;">Brutto</div>
<div class="t" style="left:749.00px;top:448.51px;font-size:14.4px;font-weight:normal;color:#262626;letter-spacing:-0.254px;">Kwoty walutowe</div>
<div class="t" style="left:749.00px;top:472.61px;font-size:14.4px;font-weight:normal;color:#262626;letter-spacing:-0.150px;">Netto</div>
<div class="t" style="left:855.30px;top:472.61px;font-size:14.4px;font-weight:normal;color:#262626;letter-spacing:-0.250px;transform:scaleX(0.9626);transform-origin:0 0;">VAT</div>
<div class="t" style="left:948.90px;top:472.61px;font-size:14.4px;font-weight:normal;color:#262626;letter-spacing:-0.040px;">Brutto</div>
<div class="t" style="left:1055.00px;top:448.51px;font-size:14.4px;font-weight:normal;color:#262626;letter-spacing:-0.250px;transform:scaleX(0.9663);transform-origin:0 0;">Ręcznie</div>
<div class="t" style="left:1129.80px;top:448.51px;font-size:14.4px;font-weight:normal;color:#262626;letter-spacing:-0.257px;">Zaliczka</div>
<div class="t" style="left:1205.30px;top:448.51px;font-size:14.4px;font-weight:normal;color:#262626;letter-spacing:-0.250px;transform:scaleX(0.9626);transform-origin:0 0;">VAT</div>
<div class="t" style="left:1205.30px;top:472.61px;font-size:14.4px;font-weight:normal;color:#262626;letter-spacing:-0.250px;transform:scaleX(0.9513);transform-origin:0 0;">Data VAT</div>
<div class="t" style="left:1293.90px;top:472.61px;font-size:14.4px;font-weight:normal;color:#262626;letter-spacing:-0.250px;transform:scaleX(0.9497);transform-origin:0 0;">Kurs</div>
<svg class="r" style="left:168.4px;top:470px;" width="20" height="22" viewBox="168.4 470 20 22"><path d="M175.4 485.8 V475.5 M170.1 480.9 L175.4 475.5 L180.70000000000002 480.9" fill="none" stroke="#333" stroke-width="1.2"/><text x="179.0" y="490.7" font-family="Liberation Sans" font-size="9.5" fill="#222">2</text></svg>
<svg class="r" style="left:264.5px;top:470px;" width="20" height="22" viewBox="264.5 470 20 22"><path d="M271.5 485.8 V475.5 M266.2 480.9 L271.5 475.5 L276.8 480.9" fill="none" stroke="#333" stroke-width="1.2"/><text x="275.1" y="490.7" font-family="Liberation Sans" font-size="9.5" fill="#222">3</text></svg>
<svg class="r" style="left:323.5px;top:470px;" width="20" height="22" viewBox="323.5 470 20 22"><path d="M330.5 485.8 V475.5 M325.2 480.9 L330.5 475.5 L335.8 480.9" fill="none" stroke="#333" stroke-width="1.2"/><text x="334.1" y="490.7" font-family="Liberation Sans" font-size="9.5" fill="#222">4</text></svg>
<svg class="r" style="left:404px;top:446px;" width="22" height="22" viewBox="404 446 22 22"><path d="M413.5 462 V451.6 M408.2 457 L413.5 451.6 L418.8 457" fill="none" stroke="#333" stroke-width="1.2"/><text x="417.1" y="466.8" font-family="Liberation Sans" font-size="9.5" fill="#222">5</text></svg>
<svg class="r" style="left:1334px;top:461px;" width="10" height="14" viewBox="0 0 10 14"><path d="M8 1 L2 7 L8 13" fill="none" stroke="#bbb" stroke-width="1"/></svg>
<div class="r" style="left:1px;top:492px;width:1349px;height:254px;background:#fff;"></div>
<div class="r" style="left:34.5px;top:492px;width:307.0px;height:29px;background:#fefee3;"></div>
<div class="r" style="left:424px;top:492px;width:319.5px;height:29px;background:#bbddf6;"></div>
<div class="r" style="left:743.5px;top:492px;width:306.29999999999995px;height:29px;background:#dde57a;"></div>
<div class="r" style="left:1124.7px;top:492px;width:74.79999999999995px;height:29px;background:#fefee3;"></div>
<div class="r" style="left:1345px;top:492px;width:4px;height:29px;background:#fefee3;"></div>
<div class="r" style="left:282px;top:492px;width:1px;height:29px;background:#fff;"></div>
<div class="t" style="left:44.40px;top:500.51px;font-size:14.4px;font-weight:normal;color:#111;letter-spacing:-0.250px;transform:scaleX(0.9576);transform-origin:0 0;">PL</div>
<div class="t" style="left:112.00px;top:500.51px;font-size:14.4px;font-weight:normal;color:#111;letter-spacing:-0.250px;transform:scaleX(0.8834);transform-origin:0 0;">23%</div>
<div class="t" style="left:195.00px;top:500.51px;font-size:14.4px;font-weight:normal;color:#111;letter-spacing:-0.250px;transform:scaleX(0.8898);transform-origin:0 0;">ZPOZ</div>
<div class="t" style="left:292.30px;top:500.51px;font-size:14.4px;font-weight:normal;color:#111;letter-spacing:-0.200px;">B</div>
<div class="t" style="left:467.80px;top:500.51px;font-size:14.4px;font-weight:normal;color:#111;letter-spacing:-0.250px;transform:scaleX(0.9494);transform-origin:0 0;">4 698,10</div>
<div class="t" style="left:568.00px;top:500.51px;font-size:14.4px;font-weight:normal;color:#111;letter-spacing:-0.250px;transform:scaleX(0.9439);transform-origin:0 0;">1 080,56</div>
<div class="t" style="left:686.70px;top:500.51px;font-size:14.4px;font-weight:normal;color:#111;letter-spacing:-0.250px;transform:scaleX(0.9494);transform-origin:0 0;">5 778,66</div>
<div class="t" style="left:793.30px;top:500.51px;font-size:14.4px;font-weight:normal;color:#111;letter-spacing:-0.250px;transform:scaleX(0.9365);transform-origin:0 0;">1 000,00</div>
<div class="t" style="left:897.50px;top:500.51px;font-size:14.4px;font-weight:normal;color:#111;letter-spacing:-0.250px;transform:scaleX(0.9591);transform-origin:0 0;">230,00</div>
<div class="t" style="left:993.50px;top:500.51px;font-size:14.4px;font-weight:normal;color:#111;letter-spacing:-0.250px;transform:scaleX(0.9365);transform-origin:0 0;">1 230,00</div>
<div class="t" style="left:1209.20px;top:500.51px;font-size:14.4px;font-weight:normal;color:#111;letter-spacing:-0.250px;transform:scaleX(0.9587);transform-origin:0 0;">2023-03-22</div>
<div class="t" style="left:1299.00px;top:500.51px;font-size:14.4px;font-weight:normal;color:#111;letter-spacing:-0.250px;transform:scaleX(0.9263);transform-origin:0 0;">4,6981</div>
<div class="r" style="left:10.3px;top:500.8px;width:14.5px;height:14.300000000000011px;background:#fff;border:1px solid #c6c6c6;"></div>
<div class="r" style="left:1082.5px;top:500.8px;width:14.5px;height:14.499999999999943px;background:#fff;border:1px solid #c9c9c9;"></div>
<div class="r" style="left:1157.5px;top:500.8px;width:14.5px;height:14.499999999999943px;background:#fff;border:1px solid #c9c9c9;"></div>
<div class="r" style="left:34.5px;top:520.5px;width:307.0px;height:26.5px;background:#fefee3;"></div>
<div class="r" style="left:424px;top:520.5px;width:319.5px;height:26.5px;background:#bbddf6;"></div>
<div class="r" style="left:743.5px;top:520.5px;width:306.29999999999995px;height:26.5px;background:#dde57a;"></div>
<div class="r" style="left:1124.7px;top:520.5px;width:74.79999999999995px;height:26.5px;background:#fefee3;"></div>
<div class="r" style="left:1345px;top:520.5px;width:4px;height:26.5px;background:#fefee3;"></div>
<div class="r" style="left:282px;top:520.5px;width:1px;height:26.5px;background:#fff;"></div>
<div class="r" style="left:1px;top:546px;width:1347px;height:1px;background:#ebebeb;"></div>
<div class="t" style="left:44.40px;top:527.51px;font-size:14.4px;font-weight:normal;color:#111;letter-spacing:-0.250px;transform:scaleX(0.9576);transform-origin:0 0;">PL</div>
<div class="t" style="left:112.00px;top:527.51px;font-size:14.4px;font-weight:normal;color:#111;letter-spacing:-0.250px;transform:scaleX(0.9555);transform-origin:0 0;">8%</div>
<div class="t" style="left:195.00px;top:527.51px;font-size:14.4px;font-weight:normal;color:#111;letter-spacing:-0.250px;transform:scaleX(0.8898);transform-origin:0 0;">ZPOZ</div>
<div class="t" style="left:292.30px;top:527.51px;font-size:14.4px;font-weight:normal;color:#111;letter-spacing:-0.200px;">B</div>
<div class="t" style="left:494.80px;top:527.51px;font-size:14.4px;font-weight:normal;color:#111;letter-spacing:-0.250px;transform:scaleX(0.9028);transform-origin:0 0;">0,00</div>
<div class="t" style="left:594.70px;top:527.51px;font-size:14.4px;font-weight:normal;color:#111;letter-spacing:-0.250px;transform:scaleX(0.9028);transform-origin:0 0;">0,00</div>
<div class="t" style="left:713.70px;top:527.51px;font-size:14.4px;font-weight:normal;color:#111;letter-spacing:-0.250px;transform:scaleX(0.9028);transform-origin:0 0;">0,00</div>
<div class="t" style="left:819.60px;top:527.51px;font-size:14.4px;font-weight:normal;color:#111;letter-spacing:-0.250px;transform:scaleX(0.9028);transform-origin:0 0;">0,00</div>
<div class="t" style="left:913.90px;top:527.51px;font-size:14.4px;font-weight:normal;color:#111;letter-spacing:-0.250px;transform:scaleX(0.9028);transform-origin:0 0;">0,00</div>
<div class="t" style="left:1019.80px;top:527.51px;font-size:14.4px;font-weight:normal;color:#111;letter-spacing:-0.250px;transform:scaleX(0.9028);transform-origin:0 0;">0,00</div>
<div class="t" style="left:1209.20px;top:527.51px;font-size:14.4px;font-weight:normal;color:#111;letter-spacing:-0.250px;transform:scaleX(0.9587);transform-origin:0 0;">2023-03-22</div>
<div class="t" style="left:1299.00px;top:527.51px;font-size:14.4px;font-weight:normal;color:#111;letter-spacing:-0.250px;transform:scaleX(0.9263);transform-origin:0 0;">4,6981</div>
<div class="r" style="left:10.3px;top:527.8px;width:14.5px;height:14.299999999999955px;background:#fff;border:1px solid #c6c6c6;"></div>
<div class="r" style="left:1082.5px;top:527.8px;width:14.5px;height:14.5px;background:#fff;border:1px solid #c9c9c9;"></div>
<div class="r" style="left:1157.5px;top:527.8px;width:14.5px;height:14.5px;background:#fff;border:1px solid #c9c9c9;"></div>
<div class="r" style="left:34.5px;top:547px;width:307.0px;height:27px;background:#fefee3;"></div>
<div class="r" style="left:424px;top:547px;width:319.5px;height:27px;background:#bbddf6;"></div>
<div class="r" style="left:743.5px;top:547px;width:306.29999999999995px;height:27px;background:#dde57a;"></div>
<div class="r" style="left:1124.7px;top:547px;width:74.79999999999995px;height:27px;background:#fefee3;"></div>
<div class="r" style="left:1345px;top:547px;width:4px;height:27px;background:#fefee3;"></div>
<div class="r" style="left:282px;top:547px;width:1px;height:27px;background:#fff;"></div>
<div class="r" style="left:1px;top:573px;width:1347px;height:1px;background:#ebebeb;"></div>
<div class="t" style="left:44.40px;top:553.01px;font-size:14.4px;font-weight:normal;color:#111;letter-spacing:-0.250px;transform:scaleX(0.9576);transform-origin:0 0;">PL</div>
<div class="t" style="left:112.00px;top:553.01px;font-size:14.4px;font-weight:normal;color:#111;letter-spacing:-0.250px;transform:scaleX(0.9555);transform-origin:0 0;">5%</div>
<div class="t" style="left:195.00px;top:553.01px;font-size:14.4px;font-weight:normal;color:#111;letter-spacing:-0.250px;transform:scaleX(0.8898);transform-origin:0 0;">ZPOZ</div>
<div class="t" style="left:292.30px;top:553.01px;font-size:14.4px;font-weight:normal;color:#111;letter-spacing:-0.200px;">B</div>
<div class="t" style="left:494.80px;top:553.01px;font-size:14.4px;font-weight:normal;color:#111;letter-spacing:-0.250px;transform:scaleX(0.9028);transform-origin:0 0;">0,00</div>
<div class="t" style="left:594.70px;top:553.01px;font-size:14.4px;font-weight:normal;color:#111;letter-spacing:-0.250px;transform:scaleX(0.9028);transform-origin:0 0;">0,00</div>
<div class="t" style="left:713.70px;top:553.01px;font-size:14.4px;font-weight:normal;color:#111;letter-spacing:-0.250px;transform:scaleX(0.9028);transform-origin:0 0;">0,00</div>
<div class="t" style="left:819.60px;top:553.01px;font-size:14.4px;font-weight:normal;color:#111;letter-spacing:-0.250px;transform:scaleX(0.9028);transform-origin:0 0;">0,00</div>
<div class="t" style="left:913.90px;top:553.01px;font-size:14.4px;font-weight:normal;color:#111;letter-spacing:-0.250px;transform:scaleX(0.9028);transform-origin:0 0;">0,00</div>
<div class="t" style="left:1019.80px;top:553.01px;font-size:14.4px;font-weight:normal;color:#111;letter-spacing:-0.250px;transform:scaleX(0.9028);transform-origin:0 0;">0,00</div>
<div class="t" style="left:1209.20px;top:553.01px;font-size:14.4px;font-weight:normal;color:#111;letter-spacing:-0.250px;transform:scaleX(0.9587);transform-origin:0 0;">2023-03-22</div>
<div class="t" style="left:1299.00px;top:553.01px;font-size:14.4px;font-weight:normal;color:#111;letter-spacing:-0.250px;transform:scaleX(0.9263);transform-origin:0 0;">4,6981</div>
<div class="r" style="left:10.3px;top:553.3px;width:14.5px;height:14.299999999999955px;background:#fff;border:1px solid #c6c6c6;"></div>
<div class="r" style="left:1082.5px;top:553.3px;width:14.5px;height:14.5px;background:#fff;border:1px solid #c9c9c9;"></div>
<div class="r" style="left:1157.5px;top:553.3px;width:14.5px;height:14.5px;background:#fff;border:1px solid #c9c9c9;"></div>
<div class="r" style="left:34.5px;top:574px;width:307.0px;height:26px;background:#fefee3;"></div>
<div class="r" style="left:424px;top:574px;width:319.5px;height:26px;background:#bbddf6;"></div>
<div class="r" style="left:743.5px;top:574px;width:306.29999999999995px;height:26px;background:#dde57a;"></div>
<div class="r" style="left:1124.7px;top:574px;width:74.79999999999995px;height:26px;background:#fefee3;"></div>
<div class="r" style="left:1345px;top:574px;width:4px;height:26px;background:#fefee3;"></div>
<div class="r" style="left:282px;top:574px;width:1px;height:26px;background:#fff;"></div>
<div class="r" style="left:1px;top:599px;width:1347px;height:1px;background:#ebebeb;"></div>
<div class="t" style="left:44.40px;top:580.01px;font-size:14.4px;font-weight:normal;color:#111;letter-spacing:-0.250px;transform:scaleX(0.9576);transform-origin:0 0;">PL</div>
<div class="t" style="left:112.00px;top:580.01px;font-size:14.4px;font-weight:normal;color:#111;letter-spacing:-0.250px;transform:scaleX(0.9555);transform-origin:0 0;">4%</div>
<div class="t" style="left:195.00px;top:580.01px;font-size:14.4px;font-weight:normal;color:#111;letter-spacing:-0.250px;transform:scaleX(0.8898);transform-origin:0 0;">ZPOZ</div>
<div class="t" style="left:292.30px;top:580.01px;font-size:14.4px;font-weight:normal;color:#111;letter-spacing:-0.200px;">B</div>
<div class="t" style="left:494.80px;top:580.01px;font-size:14.4px;font-weight:normal;color:#111;letter-spacing:-0.250px;transform:scaleX(0.9028);transform-origin:0 0;">0,00</div>
<div class="t" style="left:594.70px;top:580.01px;font-size:14.4px;font-weight:normal;color:#111;letter-spacing:-0.250px;transform:scaleX(0.9028);transform-origin:0 0;">0,00</div>
<div class="t" style="left:713.70px;top:580.01px;font-size:14.4px;font-weight:normal;color:#111;letter-spacing:-0.250px;transform:scaleX(0.9028);transform-origin:0 0;">0,00</div>
<div class="t" style="left:819.60px;top:580.01px;font-size:14.4px;font-weight:normal;color:#111;letter-spacing:-0.250px;transform:scaleX(0.9028);transform-origin:0 0;">0,00</div>
<div class="t" style="left:913.90px;top:580.01px;font-size:14.4px;font-weight:normal;color:#111;letter-spacing:-0.250px;transform:scaleX(0.9028);transform-origin:0 0;">0,00</div>
<div class="t" style="left:1019.80px;top:580.01px;font-size:14.4px;font-weight:normal;color:#111;letter-spacing:-0.250px;transform:scaleX(0.9028);transform-origin:0 0;">0,00</div>
<div class="t" style="left:1209.20px;top:580.01px;font-size:14.4px;font-weight:normal;color:#111;letter-spacing:-0.250px;transform:scaleX(0.9587);transform-origin:0 0;">2023-03-22</div>
<div class="t" style="left:1299.00px;top:580.01px;font-size:14.4px;font-weight:normal;color:#111;letter-spacing:-0.250px;transform:scaleX(0.9263);transform-origin:0 0;">4,6981</div>
<div class="r" style="left:10.3px;top:580.3px;width:14.5px;height:14.299999999999955px;background:#fff;border:1px solid #c6c6c6;"></div>
<div class="r" style="left:1082.5px;top:580.3px;width:14.5px;height:14.5px;background:#fff;border:1px solid #c9c9c9;"></div>
<div class="r" style="left:1157.5px;top:580.3px;width:14.5px;height:14.5px;background:#fff;border:1px solid #c9c9c9;"></div>
<div class="r" style="left:34.5px;top:600px;width:307.0px;height:26px;background:#fefee3;"></div>
<div class="r" style="left:424px;top:600px;width:319.5px;height:26px;background:#bbddf6;"></div>
<div class="r" style="left:743.5px;top:600px;width:306.29999999999995px;height:26px;background:#dde57a;"></div>
<div class="r" style="left:1124.7px;top:600px;width:74.79999999999995px;height:26px;background:#fefee3;"></div>
<div class="r" style="left:1345px;top:600px;width:4px;height:26px;background:#fefee3;"></div>
<div class="r" style="left:282px;top:600px;width:1px;height:26px;background:#fff;"></div>
<div class="r" style="left:1px;top:625px;width:1347px;height:1px;background:#ebebeb;"></div>
<div class="t" style="left:44.40px;top:606.01px;font-size:14.4px;font-weight:normal;color:#111;letter-spacing:-0.250px;transform:scaleX(0.9576);transform-origin:0 0;">PL</div>
<div class="t" style="left:112.00px;top:606.01px;font-size:14.4px;font-weight:normal;color:#111;letter-spacing:-0.250px;transform:scaleX(0.9555);transform-origin:0 0;">0%</div>
<div class="t" style="left:195.00px;top:606.01px;font-size:14.4px;font-weight:normal;color:#111;letter-spacing:-0.250px;transform:scaleX(0.8898);transform-origin:0 0;">ZPOZ</div>
<div class="t" style="left:292.30px;top:606.01px;font-size:14.4px;font-weight:normal;color:#111;letter-spacing:-0.200px;">B</div>
<div class="t" style="left:494.80px;top:606.01px;font-size:14.4px;font-weight:normal;color:#111;letter-spacing:-0.250px;transform:scaleX(0.9028);transform-origin:0 0;">0,00</div>
<div class="t" style="left:594.70px;top:606.01px;font-size:14.4px;font-weight:normal;color:#111;letter-spacing:-0.250px;transform:scaleX(0.9028);transform-origin:0 0;">0,00</div>
<div class="t" style="left:713.70px;top:606.01px;font-size:14.4px;font-weight:normal;color:#111;letter-spacing:-0.250px;transform:scaleX(0.9028);transform-origin:0 0;">0,00</div>
<div class="t" style="left:819.60px;top:606.01px;font-size:14.4px;font-weight:normal;color:#111;letter-spacing:-0.250px;transform:scaleX(0.9028);transform-origin:0 0;">0,00</div>
<div class="t" style="left:913.90px;top:606.01px;font-size:14.4px;font-weight:normal;color:#111;letter-spacing:-0.250px;transform:scaleX(0.9028);transform-origin:0 0;">0,00</div>
<div class="t" style="left:1019.80px;top:606.01px;font-size:14.4px;font-weight:normal;color:#111;letter-spacing:-0.250px;transform:scaleX(0.9028);transform-origin:0 0;">0,00</div>
<div class="t" style="left:1209.20px;top:606.01px;font-size:14.4px;font-weight:normal;color:#111;letter-spacing:-0.250px;transform:scaleX(0.9587);transform-origin:0 0;">2023-03-22</div>
<div class="t" style="left:1299.00px;top:606.01px;font-size:14.4px;font-weight:normal;color:#111;letter-spacing:-0.250px;transform:scaleX(0.9263);transform-origin:0 0;">4,6981</div>
<div class="r" style="left:10.3px;top:606.3px;width:14.5px;height:14.299999999999955px;background:#fff;border:1px solid #c6c6c6;"></div>
<div class="r" style="left:1082.5px;top:606.3px;width:14.5px;height:14.5px;background:#fff;border:1px solid #c9c9c9;"></div>
<div class="r" style="left:1157.5px;top:606.3px;width:14.5px;height:14.5px;background:#fff;border:1px solid #c9c9c9;"></div>
<div class="r" style="left:34.5px;top:626px;width:307.0px;height:26px;background:#fefee3;"></div>
<div class="r" style="left:424px;top:626px;width:319.5px;height:26px;background:#bbddf6;"></div>
<div class="r" style="left:743.5px;top:626px;width:306.29999999999995px;height:26px;background:#dde57a;"></div>
<div class="r" style="left:1124.7px;top:626px;width:74.79999999999995px;height:26px;background:#fefee3;"></div>
<div class="r" style="left:1345px;top:626px;width:4px;height:26px;background:#fefee3;"></div>
<div class="r" style="left:282px;top:626px;width:1px;height:26px;background:#fff;"></div>
<div class="r" style="left:1px;top:651px;width:1347px;height:1px;background:#ebebeb;"></div>
<div class="t" style="left:44.40px;top:632.01px;font-size:14.4px;font-weight:normal;color:#111;letter-spacing:-0.250px;transform:scaleX(0.9576);transform-origin:0 0;">PL</div>
<div class="t" style="left:112.00px;top:632.01px;font-size:14.4px;font-weight:normal;color:#111;letter-spacing:-0.250px;transform:scaleX(0.9598);transform-origin:0 0;">NPN</div>
<div class="t" style="left:195.00px;top:632.01px;font-size:14.4px;font-weight:normal;color:#111;letter-spacing:-0.250px;transform:scaleX(0.9639);transform-origin:0 0;">NVAT</div>
<div class="t" style="left:292.30px;top:632.01px;font-size:14.4px;font-weight:normal;color:#111;letter-spacing:-0.200px;">N</div>
<div class="t" style="left:494.80px;top:632.01px;font-size:14.4px;font-weight:normal;color:#111;letter-spacing:-0.250px;transform:scaleX(0.9028);transform-origin:0 0;">0,00</div>
<div class="t" style="left:594.70px;top:632.01px;font-size:14.4px;font-weight:normal;color:#111;letter-spacing:-0.250px;transform:scaleX(0.9028);transform-origin:0 0;">0,00</div>
<div class="t" style="left:713.70px;top:632.01px;font-size:14.4px;font-weight:normal;color:#111;letter-spacing:-0.250px;transform:scaleX(0.9028);transform-origin:0 0;">0,00</div>
<div class="t" style="left:819.60px;top:632.01px;font-size:14.4px;font-weight:normal;color:#111;letter-spacing:-0.250px;transform:scaleX(0.9028);transform-origin:0 0;">0,00</div>
<div class="t" style="left:913.90px;top:632.01px;font-size:14.4px;font-weight:normal;color:#111;letter-spacing:-0.250px;transform:scaleX(0.9028);transform-origin:0 0;">0,00</div>
<div class="t" style="left:1019.80px;top:632.01px;font-size:14.4px;font-weight:normal;color:#111;letter-spacing:-0.250px;transform:scaleX(0.9028);transform-origin:0 0;">0,00</div>
<div class="t" style="left:1209.20px;top:632.01px;font-size:14.4px;font-weight:normal;color:#111;letter-spacing:-0.250px;transform:scaleX(0.9587);transform-origin:0 0;">2023-03-22</div>
<div class="t" style="left:1299.00px;top:632.01px;font-size:14.4px;font-weight:normal;color:#111;letter-spacing:-0.250px;transform:scaleX(0.9263);transform-origin:0 0;">4,6981</div>
<div class="r" style="left:10.3px;top:632.3px;width:14.5px;height:14.299999999999955px;background:#fff;border:1px solid #c6c6c6;"></div>
<div class="r" style="left:1082.5px;top:632.3px;width:14.5px;height:14.5px;background:#fff;border:1px solid #c9c9c9;"></div>
<div class="r" style="left:1157.5px;top:632.3px;width:14.5px;height:14.5px;background:#fff;border:1px solid #c9c9c9;"></div>
<div class="r" style="left:34.5px;top:652px;width:307.0px;height:27px;background:#fefee3;"></div>
<div class="r" style="left:424px;top:652px;width:319.5px;height:27px;background:#bbddf6;"></div>
<div class="r" style="left:743.5px;top:652px;width:306.29999999999995px;height:27px;background:#dde57a;"></div>
<div class="r" style="left:1124.7px;top:652px;width:74.79999999999995px;height:27px;background:#fefee3;"></div>
<div class="r" style="left:1345px;top:652px;width:4px;height:27px;background:#fefee3;"></div>
<div class="r" style="left:282px;top:652px;width:1px;height:27px;background:#fff;"></div>
<div class="r" style="left:1px;top:678px;width:1347px;height:1px;background:#ebebeb;"></div>
<div class="t" style="left:44.40px;top:658.01px;font-size:14.4px;font-weight:normal;color:#111;letter-spacing:-0.250px;transform:scaleX(0.9576);transform-origin:0 0;">PL</div>
<div class="t" style="left:112.00px;top:658.01px;font-size:14.4px;font-weight:normal;color:#111;letter-spacing:-0.250px;transform:scaleX(0.9594);transform-origin:0 0;">NPO</div>
<div class="t" style="left:195.00px;top:658.01px;font-size:14.4px;font-weight:normal;color:#111;letter-spacing:-0.250px;transform:scaleX(0.8898);transform-origin:0 0;">ZPOZ</div>
<div class="t" style="left:292.30px;top:658.01px;font-size:14.4px;font-weight:normal;color:#111;letter-spacing:-0.200px;">B</div>
<div class="t" style="left:494.80px;top:658.01px;font-size:14.4px;font-weight:normal;color:#111;letter-spacing:-0.250px;transform:scaleX(0.9028);transform-origin:0 0;">0,00</div>
<div class="t" style="left:594.70px;top:658.01px;font-size:14.4px;font-weight:normal;color:#111;letter-spacing:-0.250px;transform:scaleX(0.9028);transform-origin:0 0;">0,00</div>
<div class="t" style="left:713.70px;top:658.01px;font-size:14.4px;font-weight:normal;color:#111;letter-spacing:-0.250px;transform:scaleX(0.9028);transform-origin:0 0;">0,00</div>
<div class="t" style="left:819.60px;top:658.01px;font-size:14.4px;font-weight:normal;color:#111;letter-spacing:-0.250px;transform:scaleX(0.9028);transform-origin:0 0;">0,00</div>
<div class="t" style="left:913.90px;top:658.01px;font-size:14.4px;font-weight:normal;color:#111;letter-spacing:-0.250px;transform:scaleX(0.9028);transform-origin:0 0;">0,00</div>
<div class="t" style="left:1019.80px;top:658.01px;font-size:14.4px;font-weight:normal;color:#111;letter-spacing:-0.250px;transform:scaleX(0.9028);transform-origin:0 0;">0,00</div>
<div class="t" style="left:1209.20px;top:658.01px;font-size:14.4px;font-weight:normal;color:#111;letter-spacing:-0.250px;transform:scaleX(0.9587);transform-origin:0 0;">2023-03-22</div>
<div class="t" style="left:1299.00px;top:658.01px;font-size:14.4px;font-weight:normal;color:#111;letter-spacing:-0.250px;transform:scaleX(0.9263);transform-origin:0 0;">4,6981</div>
<div class="r" style="left:10.3px;top:658.3px;width:14.5px;height:14.299999999999955px;background:#fff;border:1px solid #c6c6c6;"></div>
<div class="r" style="left:1082.5px;top:658.3px;width:14.5px;height:14.5px;background:#fff;border:1px solid #c9c9c9;"></div>
<div class="r" style="left:1157.5px;top:658.3px;width:14.5px;height:14.5px;background:#fff;border:1px solid #c9c9c9;"></div>
<div class="r" style="left:34.5px;top:679px;width:307.0px;height:26px;background:#fefee3;"></div>
<div class="r" style="left:424px;top:679px;width:319.5px;height:26px;background:#bbddf6;"></div>
<div class="r" style="left:743.5px;top:679px;width:306.29999999999995px;height:26px;background:#dde57a;"></div>
<div class="r" style="left:1124.7px;top:679px;width:74.79999999999995px;height:26px;background:#fefee3;"></div>
<div class="r" style="left:1345px;top:679px;width:4px;height:26px;background:#fefee3;"></div>
<div class="r" style="left:282px;top:679px;width:1px;height:26px;background:#fff;"></div>
<div class="r" style="left:1px;top:704px;width:1347px;height:1px;background:#ebebeb;"></div>
<div class="t" style="left:44.40px;top:685.01px;font-size:14.4px;font-weight:normal;color:#111;letter-spacing:-0.250px;transform:scaleX(0.9576);transform-origin:0 0;">PL</div>
<div class="t" style="left:112.00px;top:685.01px;font-size:14.4px;font-weight:normal;color:#111;letter-spacing:-0.250px;transform:scaleX(0.9547);transform-origin:0 0;">OO</div>
<div class="t" style="left:195.00px;top:685.01px;font-size:14.4px;font-weight:normal;color:#111;letter-spacing:-0.250px;transform:scaleX(0.9607);transform-origin:0 0;">STN</div>
<div class="t" style="left:292.30px;top:685.01px;font-size:14.4px;font-weight:normal;color:#111;letter-spacing:-0.200px;">B</div>
<div class="t" style="left:494.80px;top:685.01px;font-size:14.4px;font-weight:normal;color:#111;letter-spacing:-0.250px;transform:scaleX(0.9028);transform-origin:0 0;">0,00</div>
<div class="t" style="left:594.70px;top:685.01px;font-size:14.4px;font-weight:normal;color:#111;letter-spacing:-0.250px;transform:scaleX(0.9028);transform-origin:0 0;">0,00</div>
<div class="t" style="left:713.70px;top:685.01px;font-size:14.4px;font-weight:normal;color:#111;letter-spacing:-0.250px;transform:scaleX(0.9028);transform-origin:0 0;">0,00</div>
<div class="t" style="left:819.60px;top:685.01px;font-size:14.4px;font-weight:normal;color:#111;letter-spacing:-0.250px;transform:scaleX(0.9028);transform-origin:0 0;">0,00</div>
<div class="t" style="left:913.90px;top:685.01px;font-size:14.4px;font-weight:normal;color:#111;letter-spacing:-0.250px;transform:scaleX(0.9028);transform-origin:0 0;">0,00</div>
<div class="t" style="left:1019.80px;top:685.01px;font-size:14.4px;font-weight:normal;color:#111;letter-spacing:-0.250px;transform:scaleX(0.9028);transform-origin:0 0;">0,00</div>
<div class="t" style="left:1209.20px;top:685.01px;font-size:14.4px;font-weight:normal;color:#111;letter-spacing:-0.250px;transform:scaleX(0.9587);transform-origin:0 0;">2023-03-22</div>
<div class="t" style="left:1299.00px;top:685.01px;font-size:14.4px;font-weight:normal;color:#111;letter-spacing:-0.250px;transform:scaleX(0.9263);transform-origin:0 0;">4,6981</div>
<div class="r" style="left:10.3px;top:685.3px;width:14.5px;height:14.299999999999955px;background:#fff;border:1px solid #c6c6c6;"></div>
<div class="r" style="left:1082.5px;top:685.3px;width:14.5px;height:14.5px;background:#fff;border:1px solid #c9c9c9;"></div>
<div class="r" style="left:1157.5px;top:685.3px;width:14.5px;height:14.5px;background:#fff;border:1px solid #c9c9c9;"></div>
<div class="r" style="left:34.5px;top:705px;width:307.0px;height:26px;background:#fefee3;"></div>
<div class="r" style="left:424px;top:705px;width:319.5px;height:26px;background:#bbddf6;"></div>
<div class="r" style="left:743.5px;top:705px;width:306.29999999999995px;height:26px;background:#dde57a;"></div>
<div class="r" style="left:1124.7px;top:705px;width:74.79999999999995px;height:26px;background:#fefee3;"></div>
<div class="r" style="left:1345px;top:705px;width:4px;height:26px;background:#fefee3;"></div>
<div class="r" style="left:282px;top:705px;width:1px;height:26px;background:#fff;"></div>
<div class="r" style="left:1px;top:730px;width:1347px;height:1px;background:#ebebeb;"></div>
<div class="t" style="left:44.40px;top:711.01px;font-size:14.4px;font-weight:normal;color:#111;letter-spacing:-0.250px;transform:scaleX(0.9576);transform-origin:0 0;">PL</div>
<div class="t" style="left:112.00px;top:711.01px;font-size:14.4px;font-weight:normal;color:#111;letter-spacing:-0.250px;transform:scaleX(0.9547);transform-origin:0 0;">ZW</div>
<div class="t" style="left:195.00px;top:711.01px;font-size:14.4px;font-weight:normal;color:#111;letter-spacing:-0.250px;transform:scaleX(0.8898);transform-origin:0 0;">ZPOZ</div>
<div class="t" style="left:292.30px;top:711.01px;font-size:14.4px;font-weight:normal;color:#111;letter-spacing:-0.200px;">Z</div>
<div class="t" style="left:494.80px;top:711.01px;font-size:14.4px;font-weight:normal;color:#111;letter-spacing:-0.250px;transform:scaleX(0.9028);transform-origin:0 0;">0,00</div>
<div class="t" style="left:594.70px;top:711.01px;font-size:14.4px;font-weight:normal;color:#111;letter-spacing:-0.250px;transform:scaleX(0.9028);transform-origin:0 0;">0,00</div>
<div class="t" style="left:713.70px;top:711.01px;font-size:14.4px;font-weight:normal;color:#111;letter-spacing:-0.250px;transform:scaleX(0.9028);transform-origin:0 0;">0,00</div>
<div class="t" style="left:819.60px;top:711.01px;font-size:14.4px;font-weight:normal;color:#111;letter-spacing:-0.250px;transform:scaleX(0.9028);transform-origin:0 0;">0,00</div>
<div class="t" style="left:913.90px;top:711.01px;font-size:14.4px;font-weight:normal;color:#111;letter-spacing:-0.250px;transform:scaleX(0.9028);transform-origin:0 0;">0,00</div>
<div class="t" style="left:1019.80px;top:711.01px;font-size:14.4px;font-weight:normal;color:#111;letter-spacing:-0.250px;transform:scaleX(0.9028);transform-origin:0 0;">0,00</div>
<div class="t" style="left:1209.20px;top:711.01px;font-size:14.4px;font-weight:normal;color:#111;letter-spacing:-0.250px;transform:scaleX(0.9587);transform-origin:0 0;">2023-03-22</div>
<div class="t" style="left:1299.00px;top:711.01px;font-size:14.4px;font-weight:normal;color:#111;letter-spacing:-0.250px;transform:scaleX(0.9263);transform-origin:0 0;">4,6981</div>
<div class="r" style="left:10.3px;top:711.3px;width:14.5px;height:14.299999999999955px;background:#fff;border:1px solid #c6c6c6;"></div>
<div class="r" style="left:1082.5px;top:711.3px;width:14.5px;height:14.5px;background:#fff;border:1px solid #c9c9c9;"></div>
<div class="r" style="left:1157.5px;top:711.3px;width:14.5px;height:14.5px;background:#fff;border:1px solid #c9c9c9;"></div>
<div class="r" style="left:1px;top:495.5px;width:4.5px;height:25.0px;background:#15669c;"></div>
<div class="r" style="left:5.5px;top:495.5px;width:29.0px;height:25.0px;background:linear-gradient(90deg,#dcdcdc,#f2f2f2 40%,#e6e6e6);"></div>
<div class="r" style="left:10.3px;top:501.2px;width:14.5px;height:14.400000000000034px;background:#f8f8f8;border:1px solid #c2c2c2;"></div>
<div class="r" style="left:1px;top:495px;width:1346px;height:1.3000000000000114px;background:#45606b;opacity:0.85;"></div>
<div class="r" style="left:1px;top:519px;width:1346px;height:1px;background:#45606b;opacity:0.85;"></div>
<div class="r" style="left:283px;top:495.8px;width:59px;height:24.19999999999999px;border:2px solid #1a6fa8;"></div>
<div class="r" style="left:1px;top:492px;width:5px;height:3px;background:#e2e2e2;"></div>
<div class="r" style="left:5px;top:492px;width:1343px;height:31px;border:3px solid #f5100f;border-radius:5px;box-shadow:0 3px 7px rgba(0,0,0,0.18), inset 0 0 8px rgba(0,0,0,0.2);"></div>
<div class="r" style="left:1px;top:746px;width:1349px;height:1px;background:#e3e3e3;"></div>
<div class="r" style="left:1px;top:747px;width:1349px;height:17px;background:#fff;"></div>
<div class="r" style="left:15px;top:751px;width:1211px;height:9px;background:#e3e3e3;"></div>
<svg class="r" style="left:4px;top:750px;" width="9" height="11" viewBox="0 0 9 11"><path d="M7 1 L2 5.5 L7 10" fill="none" stroke="#ccc" stroke-width="1"/></svg>
<svg class="r" style="left:1338px;top:750px;" width="9" height="11" viewBox="0 0 9 11"><path d="M2 1 L7 5.5 L2 10" fill="none" stroke="#ccc" stroke-width="1"/></svg>
<div class="r" style="left:1px;top:764px;width:1349px;height:42px;background:#f8f7f5;"></div>
<div class="r" style="left:1px;top:764px;width:1349px;height:1px;background:#e3e3e3;"></div>
<div class="r" style="left:1px;top:802px;width:1349px;height:1px;background:#e3e3e3;"></div>
<div class="r" style="left:1px;top:803px;width:1349px;height:3px;background:#fff;"></div>
<svg class="r" style="left:666px;top:763px;" width="20" height="5" viewBox="666 763 20 5"><path d="M669 765.5 H682" stroke="#aaa" stroke-width="1" stroke-dasharray="3 1.5"/></svg>
<div class="r" style="left:19px;top:777px;width:2.5px;height:2.3999999999999773px;background:#333;"></div>
<div class="r" style="left:19px;top:782.5px;width:2.5px;height:2.3999999999999773px;background:#333;"></div>
<div class="r" style="left:19px;top:788px;width:2.5px;height:2.3999999999999773px;background:#333;"></div>
<div class="t" style="left:58.60px;top:777.15px;font-size:14.0px;font-weight:bold;color:#222;letter-spacing:-0.250px;transform:scaleX(0.9501);transform-origin:0 0;">Dodatkowe dane dla JPK</div>
<div class="r" style="left:57px;top:798.2px;width:159px;height:3.3999999999999773px;background:#0a84d0;"></div>
<div class="t" style="left:254.70px;top:776.81px;font-size:14.4px;font-weight:normal;color:#555;letter-spacing:-0.431px;">Sumy w grupach odliczeń VAT</div>
<div class="t" style="left:480.00px;top:776.81px;font-size:14.4px;font-weight:normal;color:#555;letter-spacing:-0.353px;">Kwoty w stawkach VAT</div>
<div class="t" style="left:659.80px;top:776.81px;font-size:14.4px;font-weight:normal;color:#555;letter-spacing:-0.314px;">Zaliczki</div>
<div class="t" style="left:747.80px;top:776.81px;font-size:14.4px;font-weight:normal;color:#555;letter-spacing:-0.285px;">Wymiary kontrolingowe</div>
<div class="t" style="left:934.30px;top:776.81px;font-size:14.4px;font-weight:normal;color:#555;letter-spacing:-0.375px;">Sumy walutowe</div>
<div class="r" style="left:0px;top:0px;width:1px;height:807px;background:#0089d6;"></div>
<div class="r" style="left:1350px;top:0px;width:1px;height:807px;background:#0089d6;"></div>
<div class="r" style="left:0px;top:806px;width:1351px;height:1px;background:#0089d6;"></div>
<div class="r" style="left:0px;top:0px;width:1351px;height:1px;background:#0089d6;"></div>
</body></html>
